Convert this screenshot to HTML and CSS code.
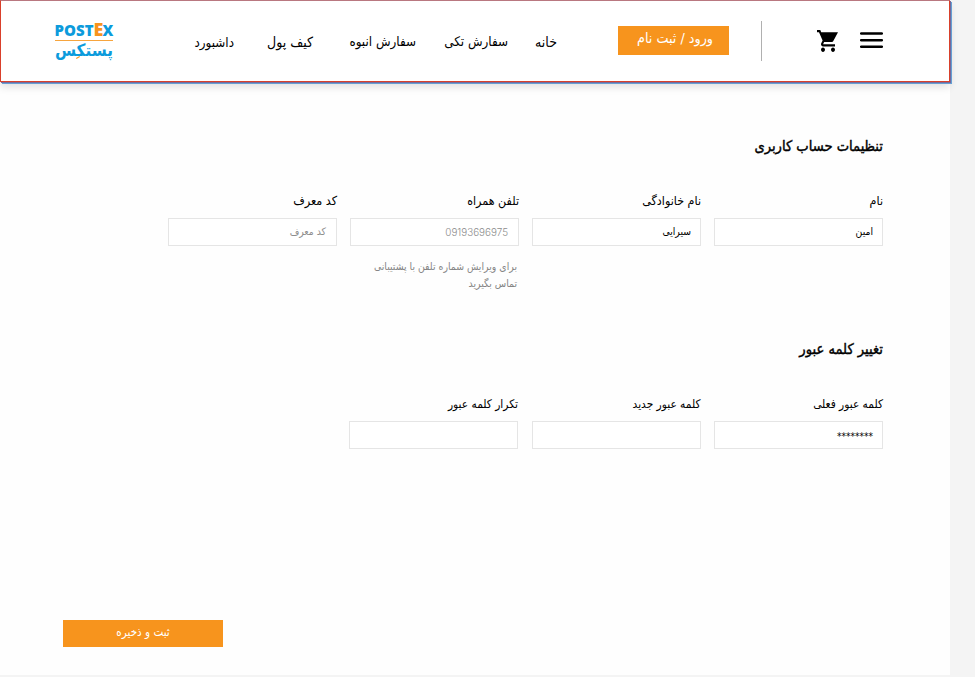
FILE: index.html
```html
<!DOCTYPE html>
<html lang="fa" dir="rtl">
<head>
<meta charset="utf-8">
<title>پستکس</title>
<link rel="stylesheet" href="styles.css">
</head>
<body>
<div class="page">
  <header class="header">
    <button class="icon menu" aria-label="منو"><svg width="23" height="17" viewBox="0 0 23 17"><path d="M1.2 1.5H21.8M1.2 8.2H21.8M1.2 14.7H21.8" stroke="#000" stroke-width="2.6" stroke-linecap="round"/></svg></button>
    <button class="icon cart" aria-label="سبد خرید"><svg width="21" height="22" viewBox="1 2 21 20" preserveAspectRatio="none"><path d="M7 18c-1.1 0-1.99.9-1.99 2S5.9 22 7 22s2-.9 2-2-.9-2-2-2zM1 2v2h2l3.6 7.59-1.35 2.45c-.16.28-.25.61-.25.96 0 1.1.9 2 2 2h12v-2H7.42c-.14 0-.25-.11-.25-.25l.03-.12.9-1.63h7.45c.75 0 1.41-.41 1.75-1.03L22 4H5.21L4.27 2H1zm16 16c-1.1 0-1.99.9-1.99 2s.89 2 1.99 2 2-.9 2-2-.9-2-2-2z"/></svg></button>
    <span class="divider"></span>
    <a class="login">ورود / ثبت نام</a>
    <nav class="nav">
      <a class="home">خانه</a>
      <a class="single">سفارش تکی</a>
      <a class="bulk">سفارش انبوه</a>
      <a class="wallet">کیف پول</a>
      <a class="dashboard">داشبورد</a>
    </nav>
    <div class="logo">
      <div class="logo-en" dir="ltr">POST<span>E</span>X</div>
      <div class="logo-fa">پستکس<i></i></div>
    </div>
  </header>
  <main>
    <section class="account">
      <h2>تنظیمات حساب کاربری</h2>
      <div class="fields">
        <div class="field"><label>نام</label><div class="input">امین</div></div>
        <div class="field"><label>نام خانوادگی</label><div class="input">سیرایی</div></div>
        <div class="field"><label>تلفن همراه</label><div class="input muted phone">09193696975</div><p>برای ویرایش شماره تلفن با پشتیبانی<br>تماس بگیرید</p></div>
        <div class="field"><label>کد معرف</label><div class="input muted">کد معرف</div></div>
      </div>
    </section>
    <section class="password">
      <h2>تغییر کلمه عبور</h2>
      <div class="fields">
        <div class="field"><label>کلمه عبور فعلی</label><div class="input stars">********</div></div>
        <div class="field"><label>کلمه عبور جدید</label><div class="input"></div></div>
        <div class="field"><label>تکرار کلمه عبور</label><div class="input"></div></div>
      </div>
    </section>
    <button class="save">ثبت و ذخیره</button>
  </main>
</div>
</body>
</html>
```
FILE: styles.css
```css
* { box-sizing: border-box; }
body { margin: 0; background: #f4f4f4; font-family: "DejaVu Sans Condensed", "DejaVu Sans", sans-serif; color: #000; }
button { border: 0; padding: 0; background: none; font-family: inherit; }
.page { width: 950px; height: 675px; margin-right: 25px; background: #fefefe; }
.header { display: flex; align-items: flex-start; width: 950px; height: 82px; padding-right: 66px; background: #fff; border: 1px solid #d9402b; border-top-color: #b97880; box-shadow: 1px 1px #75699b, 2px 2px #65a0d4, 0 5px 8px rgba(0,0,0,.12); }
.icon { display: block; flex: none; height: 22px; }
.icon svg { display: block; }
.menu { margin-top: 31px; width: 23px; height: 17px; }
.cart { margin: 29px 22px 0 0; width: 21px; }
.divider { width: 1px; height: 40px; margin: 20px 55px 0 0; background: #b0b0b0; }
.login { flex: none; width: 111px; height: 29px; margin: 25px 32px 0 0; padding-right: 16px; background: #f7941d; color: #fff; font-size: 14.2px; line-height: 25px; white-space: nowrap; }
.nav { display: flex; margin: 29px 61px 0 0; font-size: 13.3px; line-height: 24px; white-space: nowrap; }
.nav a { flex: none; }
.home { width: 24px; font-size: 14px; }
.single { width: 65px; margin-right: 25px; }
.bulk { width: 67px; margin-right: 27px; }
.wallet { width: 47px; margin-right: 36px; font-size: 14px; }
.dashboard { width: 40px; margin-right: 32px; padding-top: 1px; }
.logo { width: 58px; margin: 19px 81px 0 0; color: #0c9bdc; }
.logo-en { display: flex; justify-content: center; height: 21px; border-bottom: 1px solid #f7a53e; font: 800 15px/21px "Open Sans", sans-serif; white-space: nowrap; }
.logo-en span { color: #f7941d; font-size: 18px; margin-top: -1px; width: 9px; }
.logo-fa { position: relative; font-size: 17px; font-weight: 700; line-height: 19px; white-space: nowrap; }
.logo-fa i { position: absolute; left: 21px; top: 16px; width: 4px; height: 1px; background: #f7941d; transform: rotate(-30deg); }
main { padding: 51px 67px 0 63px; }
h2 { margin: 0; height: 28px; font-size: 14.6px; line-height: 25px; font-weight: 400; -webkit-text-stroke: .4px #000; white-space: nowrap; }
.fields { display: flex; gap: 13px; margin-top: 29px; }
.field { width: 169px; }
label { display: block; height: 28px; font-size: 12.4px; line-height: 22px; }
.input { height: 28px; border: 1px solid #e5e5e5; padding: 0 9px; background: #fff; font-size: 10.3px; line-height: 25px; }
.muted { color: #8d8d8d; padding-right: 10px; }
.phone { font-family: Inter, sans-serif; font-size: 9.9px; font-weight: 300; line-height: 27px; }
.field p { margin: 12px 2px 0 0; color: #858585; font-size: 10.4px; line-height: 17px; white-space: nowrap; }
.account { height: 203px; }
.password { height: 284px; }
.password label { font-size: 11.8px; }
.password .fields { gap: 13.5px; }
.stars { font-size: 10px; line-height: 29px; }
.save { display: block; margin-right: auto; width: 160px; height: 27px; padding-bottom: 2px; background: #f7941d; color: #fff; font-size: 11.6px; line-height: 25px; }
```
